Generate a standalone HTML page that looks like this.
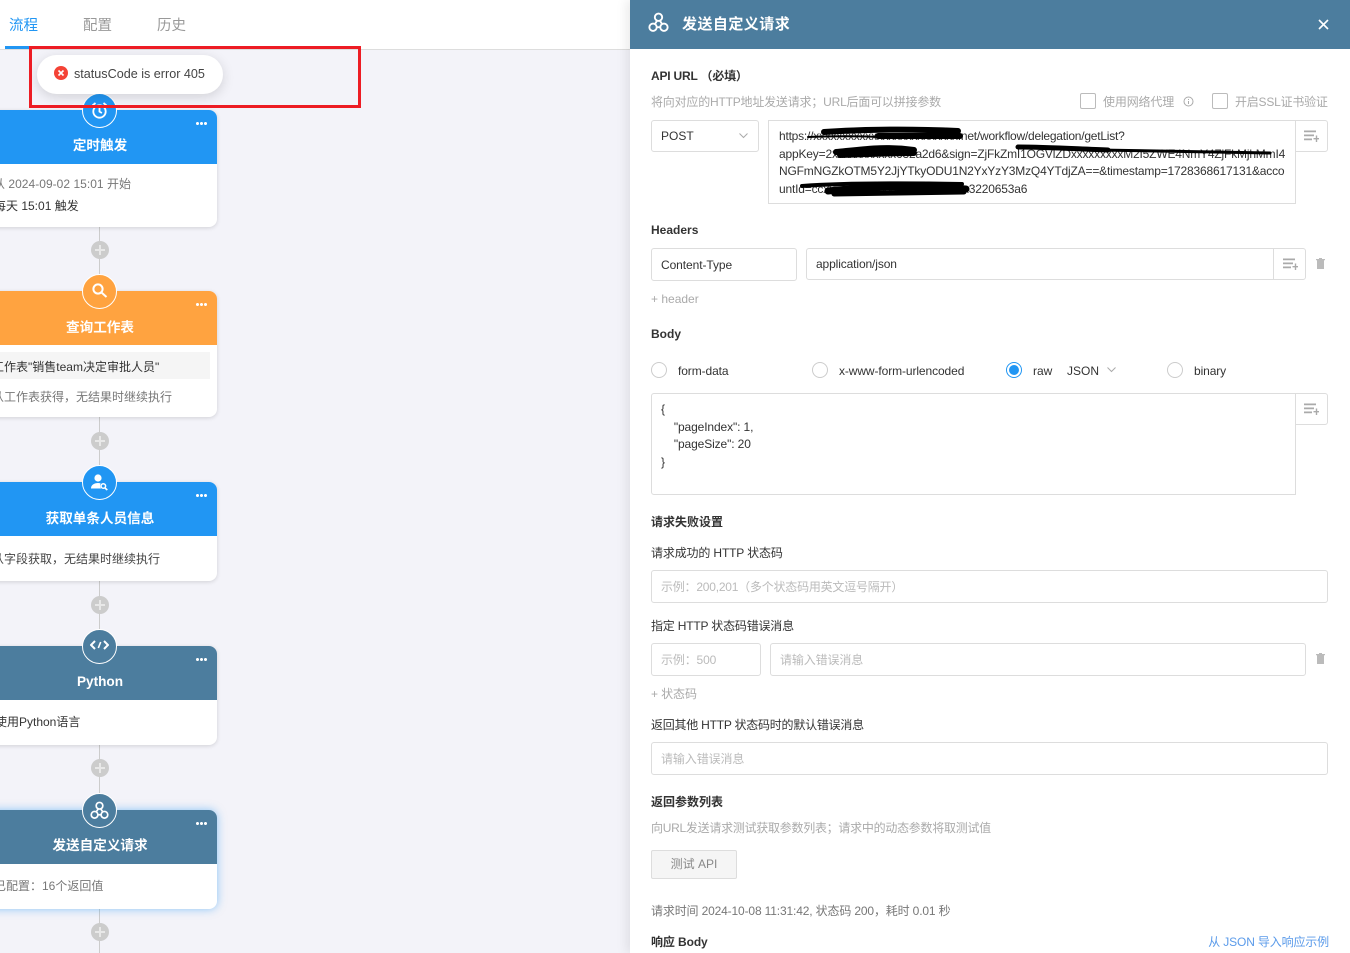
<!DOCTYPE html>
<html lang="zh"><head><meta charset="utf-8">
<style>
html,body{margin:0;padding:0;width:1350px;height:953px;overflow:hidden;background:#f3f3f9}
body{position:relative;font-family:"Liberation Sans","Noto Sans CJK SC",sans-serif;font-size:12px;color:#333}
.a,.t,.box,.card,.hd,.line,.plus,.ic{position:absolute;box-sizing:border-box}
.t{white-space:nowrap;line-height:18px;height:18px}
.g{color:#aaa}.d{color:#333}.b{font-weight:bold}
.box{background:#fff;border:1px solid #ddd;border-radius:3px}
.card{left:-20px;width:237px;background:#fff;border-radius:8px;box-shadow:0 1px 4px rgba(0,0,0,.14)}
.hd{left:0;top:0;width:237px;height:54px;border-radius:8px 8px 0 0;color:#fff;font-weight:bold;font-size:13.6px;text-align:center;line-height:18px;padding-top:27px;padding-left:3px}
.dots{position:absolute;right:10px;top:12px;width:11px;height:3px;background:radial-gradient(circle at 1.5px 1.5px,#fff 1.4px,transparent 1.6px) 0 0/4px 3px repeat-x}
.line{left:99px;width:1px;background:#ccc}
.plus{left:91px;width:18px;height:18px;border-radius:50%;background:#ccc;color:#fff}
.plus:before{content:"";position:absolute;left:4px;top:8px;width:10px;height:2px;background:#e8e8e8}
.plus:after{content:"";position:absolute;left:8px;top:4px;width:2px;height:10px;background:#e8e8e8}
.ic{left:82px;width:35px;height:35px;border-radius:50%;border:1px solid #fff}
.ic svg{position:absolute;left:7px;top:7px}
.rd{position:absolute;width:16px;height:16px;border:1px solid #ccc;border-radius:50%;box-sizing:border-box;background:#fff}
.ck{position:absolute;width:16px;height:16px;border:1px solid #bbb;border-radius:2px;box-sizing:border-box}
</style></head><body>

<!-- left top bar -->
<div class="a" style="left:0;top:0;width:630px;height:50px;background:#fff;border-bottom:1px solid #ddd"></div>
<div class="t" style="left:9px;top:17px;font-size:14.500px;color:#2196f3">流程</div>
<div class="t" style="left:83px;top:17px;font-size:14.500px;color:#999">配置</div>
<div class="t" style="left:157px;top:17px;font-size:14.500px;color:#999">历史</div>
<div class="a" style="left:5px;top:46px;width:38px;height:3px;background:#2196f3"></div>

<!-- connectors -->
<div class="line" style="top:227px;height:64px"></div>
<div class="line" style="top:417px;height:65px"></div>
<div class="line" style="top:581px;height:65px"></div>
<div class="line" style="top:745px;height:65px"></div>
<div class="line" style="top:909px;height:44px"></div>
<div class="plus" style="top:241px"></div>
<div class="plus" style="top:432px"></div>
<div class="plus" style="top:596px"></div>
<div class="plus" style="top:759px"></div>
<div class="plus" style="top:923px"></div>

<!-- card 1 -->
<div class="card" style="top:110px;height:117px">
  <div class="hd" style="background:#2196f3">定时触发<span class="dots"></span></div>
  <div class="t" style="left:13px;top:65px;color:#777;letter-spacing:.03px">从 2024-09-02 15:01 开始</div>
  <div class="t" style="left:14px;top:87px;color:#333">每天 15:01 触发</div>
</div>
<div class="ic" style="top:93px;background:#2196f3"><svg width="19" height="19" viewBox="0 0 19 19" fill="none" stroke="#fff" stroke-width="1.8"><circle cx="9.5" cy="10.5" r="6.2"/><path d="M9.5 7v3.6l2.4 1.4M2.5 4.5l3-2.5M16.5 4.5l-3-2.5"/></svg></div>

<!-- card 2 -->
<div class="card" style="top:291px;height:126px">
  <div class="hd" style="background:#ffa340;padding-top:28px">查询工作表<span class="dots"></span></div>
  <div class="a" style="left:0;top:61px;width:230px;height:27px;background:#f5f5f5"></div>
  <div class="t" style="left:12px;top:67px;color:#333">工作表"销售team决定审批人员"</div>
  <div class="t" style="left:12px;top:97px;color:#777">从工作表获得，无结果时继续执行</div>
</div>
<div class="ic" style="top:274px;background:#ffa340"><svg width="19" height="19" viewBox="0 0 19 19" fill="none" stroke="#fff" stroke-width="2"><circle cx="8" cy="7" r="4.6"/><path d="M11.5 10.5l5 4.5"/></svg></div>

<!-- card 3 -->
<div class="card" style="top:482px;height:99px">
  <div class="hd" style="background:#2196f3;padding-top:28px">获取单条人员信息<span class="dots"></span></div>
  <div class="t" style="left:12px;top:68px;color:#444">从字段获取，无结果时继续执行</div>
</div>
<div class="ic" style="top:465px;background:#2196f3"><svg width="19" height="19" viewBox="0 0 19 19" fill="#fff"><circle cx="8" cy="5" r="3.6"/><path d="M1 15.5c0-3.5 3-5.5 7-5.5 1 0 1.800.1 2.600.4-.8 1.500-.6 3.500.4 5.100z"/><circle cx="13.300" cy="13" r="2.300" fill="none" stroke="#fff" stroke-width="1.500"/><path d="M15 15l2.300 2" stroke="#fff" stroke-width="1.700"/></svg></div>

<!-- card 4 -->
<div class="card" style="top:646px;height:99px">
  <div class="hd" style="background:#4c7d9e">Python<span class="dots"></span></div>
  <div class="t" style="left:15px;top:67px;color:#333">使用Python语言</div>
</div>
<div class="ic" style="top:629px;background:#4c7d9e"><svg width="19" height="19" viewBox="0 0 19 19" fill="none" stroke="#fff" stroke-width="2"><path d="M5 4L1 8l4 4M14 4l4 4-4 4"/><path d="M10.700 5l-2.400 6" stroke-width="1.600"/></svg></div>

<!-- card 5 -->
<div class="card" style="top:810px;height:99px;box-shadow:0 0 9px rgba(33,150,243,.5)">
  <div class="hd" style="background:#4c7d9e">发送自定义请求<span class="dots"></span></div>
  <div class="t" style="left:14px;top:67px;color:#777">已配置：16个返回值</div>
</div>
<div class="ic" style="top:793px;background:#4c7d9e"><svg width="19" height="19" viewBox="0 0 20 20" fill="none" stroke="#fff" stroke-width="1.800"><circle cx="10" cy="5" r="3.500"/><circle cx="4.800" cy="14.500" r="3.500"/><circle cx="15.200" cy="14.500" r="3.500"/><path d="M8.600 8.400l-2 3M11.400 8.400l2 3M8 14.500h4"/></svg></div>

<!-- toast -->
<div class="a" style="left:37px;top:55px;width:186px;height:39px;border-radius:20px;background:#fff;box-shadow:0 3px 12px rgba(0,0,0,.14)"></div>
<svg class="a" style="left:54px;top:66px" width="14" height="14" viewBox="0 0 14 14"><circle cx="7" cy="7" r="7" fill="#f44336"/><path d="M4.500 4.500l5 5M9.500 4.500l-5 5" stroke="#fff" stroke-width="1.600"/></svg>
<div class="t" style="left:74px;top:65px;color:#444;font-size:12.600px">statusCode is error 405</div>

<!-- red annotation -->
<div class="a" style="left:29px;top:46px;width:332px;height:62px;border:3px solid #ed1c24;box-sizing:border-box"></div>

<!-- right panel -->
<div class="a" style="left:630px;top:0;width:720px;height:953px;background:#fff;box-shadow:-4px 0 10px rgba(0,0,0,.08)"></div>
<div class="a" style="left:630px;top:0;width:720px;height:49px;background:#4c7d9e"></div>
<svg class="a" style="left:648px;top:12px" width="21" height="21" viewBox="0 0 20 20" fill="none" stroke="#fff" stroke-width="1.800"><circle cx="10" cy="5" r="3.500"/><circle cx="4.800" cy="14.500" r="3.500"/><circle cx="15.200" cy="14.500" r="3.500"/><path d="M8.600 8.400l-2 3M11.400 8.400l2 3M8 14.500h4"/></svg>
<div class="t b" style="left:682px;top:16px;font-size:15px;letter-spacing:.45px;color:#fff">发送自定义请求</div>
<svg class="a" style="left:1318px;top:19px" width="11" height="11" viewBox="0 0 11 11"><path d="M1 1l9 9M10 1l-9 9" stroke="#fff" stroke-width="1.600"/></svg>

<div class="t b" style="left:651px;top:67px;color:#333;letter-spacing:-.2px">API URL （必填）</div>
<div class="t g" style="left:651px;top:93px;letter-spacing:-.2px">将向对应的HTTP地址发送请求；URL后面可以拼接参数</div>
<div class="ck" style="left:1080px;top:93px"></div>
<div class="t g" style="left:1103px;top:93px;letter-spacing:-.15px">使用网络代理</div>
<svg class="a" style="left:1183px;top:96px" width="11" height="11" viewBox="0 0 11 11" fill="none" stroke="#aaa"><circle cx="5.500" cy="5.500" r="4.500"/><path d="M5.500 5v3M5.500 3v1"/></svg>
<div class="ck" style="left:1212px;top:93px"></div>
<div class="t g" style="left:1235px;top:93px;letter-spacing:-.22px">开启SSL证书验证</div>

<div class="box" style="left:651px;top:120px;width:108px;height:32px"></div>
<div class="t d" style="left:661px;top:127px">POST</div>
<svg class="a" style="left:739px;top:133px" width="9" height="6" viewBox="0 0 9 6" fill="none" stroke="#aaa"><path d="M.5.500l4 4 4-4"/></svg>
<div class="box" style="left:1290px;top:120px;width:38px;height:32px"></div>
<div class="a" style="left:768px;top:120px;width:528px;height:84px;background:#fff;border:1px solid #ddd;box-sizing:border-box"></div>
<div class="a" style="left:779px;top:128px;line-height:17.700px;color:#333;white-space:nowrap;letter-spacing:-.18px"><span style="letter-spacing:-.22px">https://xxxxxxxxxxxxxxxxxxxxxxxxx.net/workflow/delegation/getList?</span><br>appKey=2xxxxxxxxxxx632a2d6&amp;sign=ZjFkZmI1OGVlZDxxxxxxxxxM2I5ZWE4NmY4ZjFkMjhMmI4<br>NGFmNGZkOTM5Y2JjYTkyODU1N2YxYzY3MzQ4YTdjZA==&amp;timestamp=1728368617131&amp;acco<br>untId=ccxxxxxxxxxxxxxxxxxxxxxxxxx3220653a6</div>
<svg class="a" style="left:768px;top:120px" width="528" height="84" fill="none" stroke="#000" stroke-linecap="round">
<path d="M56 12c45-3 90-3 134-1" stroke-width="6"/><path d="M40 17c30-1 50-1 70 0" stroke-width="2"/><path d="M110 16c30 0 60 0 82 0" stroke-width="6"/>
<path d="M68 32c30-3 50-6 78-2" stroke-width="6"/><path d="M72 35c25-1 50-2 74-2" stroke-width="6"/>
<path d="M250 27c30 0 60 2 90 3" stroke-width="5"/><path d="M330 30c50 1 110 2 172 3" stroke-width="3"/>
<path d="M34 66c40-3 100-3 160-2" stroke-width="4"/><path d="M60 71c45-5 90-5 138-2" stroke-width="7"/><path d="M66 74c40-1 90-1 130-2" stroke-width="5"/>
</svg>
<svg class="a" style="left:1304px;top:130px" width="15" height="13" viewBox="0 0 15 13" fill="#aaa"><path d="M0 .5h12v1.800H0zM0 4.500h10v1.800H0zM0 8.500h8v1.800H0zM9.500 8h2.300V5.500h1.400V8H15v1.400h-1.800V12h-1.400V9.400H9.500z"/></svg>

<div class="t b" style="left:651px;top:221px">Headers</div>
<div class="box" style="left:651px;top:248px;width:146px;height:33px"></div>
<div class="t d" style="left:661px;top:256px;letter-spacing:-.08px">Content-Type</div>
<div class="box" style="left:806px;top:248px;width:500px;height:32px"></div>
<div class="a" style="left:1273px;top:249px;width:1px;height:30px;background:#ddd"></div>
<div class="t d" style="left:816px;top:255px;letter-spacing:-.12px">application/json</div>
<svg class="a" style="left:1283px;top:258px" width="15" height="13" viewBox="0 0 15 13" fill="#aaa"><path d="M0 .5h12v1.800H0zM0 4.500h10v1.800H0zM0 8.500h8v1.800H0zM9.500 8h2.300V5.500h1.400V8H15v1.400h-1.800V12h-1.400V9.400H9.500z"/></svg>
<svg class="a" style="left:1316px;top:258px" width="9" height="11" viewBox="0 0 9 11" fill="#bbb"><path d="M0 1h3V0h3v1h3v1.200H0zM1 2.200h7V11H1z"/></svg>
<div class="t g" style="left:651px;top:290px">+ header</div>

<div class="t b" style="left:651px;top:325px">Body</div>
<div class="rd" style="left:651px;top:362px"></div>
<div class="t d" style="left:678px;top:362px;letter-spacing:-.1px">form-data</div>
<div class="rd" style="left:812px;top:362px"></div>
<div class="t d" style="left:839px;top:362px;letter-spacing:-.1px">x-www-form-urlencoded</div>
<div class="rd" style="left:1006px;top:362px;border-color:#2196f3"></div>
<div class="a" style="left:1009px;top:365px;width:10px;height:10px;border-radius:50%;background:#2196f3"></div>
<div class="t d" style="left:1033px;top:362px">raw</div>
<div class="t d" style="left:1067px;top:362px">JSON</div>
<svg class="a" style="left:1107px;top:367px" width="9" height="6" viewBox="0 0 9 6" fill="none" stroke="#aaa"><path d="M.5.500l4 4 4-4"/></svg>
<div class="rd" style="left:1167px;top:362px"></div>
<div class="t d" style="left:1194px;top:362px;letter-spacing:-.1px">binary</div>

<div class="box" style="left:1290px;top:393px;width:38px;height:32px"></div>
<div class="a" style="left:651px;top:393px;width:645px;height:102px;background:#fff;border:1px solid #ddd;border-radius:3px 0 0 3px;box-sizing:border-box"></div>
<div class="a" style="left:661px;top:401px;line-height:17.500px;white-space:pre;color:#333;letter-spacing:-.12px">{
    "pageIndex": 1,
    "pageSize": 20
}</div>
<svg class="a" style="left:1304px;top:403px" width="15" height="13" viewBox="0 0 15 13" fill="#aaa"><path d="M0 .5h12v1.800H0zM0 4.500h10v1.800H0zM0 8.500h8v1.800H0zM9.500 8h2.300V5.500h1.400V8H15v1.400h-1.800V12h-1.400V9.400H9.500z"/></svg>

<div class="t b" style="left:651px;top:513px">请求失败设置</div>
<div class="t d" style="left:651px;top:544px;letter-spacing:-.15px">请求成功的 HTTP 状态码</div>
<div class="box" style="left:651px;top:570px;width:677px;height:33px"></div>
<div class="t" style="left:661px;top:578px;color:#bbb;letter-spacing:-.22px">示例：200,201（多个状态码用英文逗号隔开）</div>
<div class="t d" style="left:651px;top:617px;letter-spacing:-.19px">指定 HTTP 状态码错误消息</div>
<div class="box" style="left:651px;top:643px;width:110px;height:33px"></div>
<div class="t" style="left:661px;top:651px;color:#bbb;letter-spacing:-.15px">示例：500</div>
<div class="box" style="left:770px;top:643px;width:536px;height:33px"></div>
<div class="t" style="left:780px;top:651px;color:#bbb;letter-spacing:-.12px">请输入错误消息</div>
<svg class="a" style="left:1316px;top:653px" width="9" height="11" viewBox="0 0 9 11" fill="#bbb"><path d="M0 1h3V0h3v1h3v1.200H0zM1 2.200h7V11H1z"/></svg>
<div class="t g" style="left:651px;top:685px;letter-spacing:-.1px">+ 状态码</div>
<div class="t d" style="left:651px;top:716px;letter-spacing:-.23px">返回其他 HTTP 状态码时的默认错误消息</div>
<div class="box" style="left:651px;top:742px;width:677px;height:33px"></div>
<div class="t" style="left:661px;top:750px;color:#bbb;letter-spacing:-.1px">请输入错误消息</div>

<div class="t b" style="left:651px;top:793px">返回参数列表</div>
<div class="t g" style="left:651px;top:819px;letter-spacing:-.27px">向URL发送请求测试获取参数列表；请求中的动态参数将取测试值</div>
<div class="a" style="left:651px;top:850px;width:86px;height:29px;background:#f5f5f5;border:1px solid #ddd;border-radius:2px;box-sizing:border-box;text-align:center;line-height:27px;color:#888">测试 API</div>
<div class="t" style="left:651px;top:902px;color:#777;letter-spacing:-.15px">请求时间 2024-10-08 11:31:42, 状态码 200，耗时 0.01 秒</div>
<div class="t b" style="left:651px;top:933px;letter-spacing:-.1px">响应 Body</div>
<div class="t" style="right:21px;top:933px;color:#5b9bea;letter-spacing:-.15px">从 JSON 导入响应示例</div>
</body></html>
